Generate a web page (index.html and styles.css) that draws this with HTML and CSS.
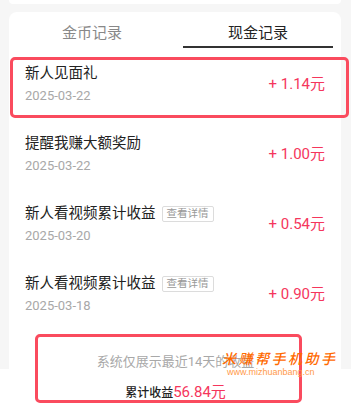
FILE: index.html
```html
<!DOCTYPE html>
<html lang="zh-CN">
<head>
<meta charset="utf-8">
<title>现金记录</title>
<link rel="stylesheet" href="styles.css">
</head>
<body>
<div class="page">
  <div class="stub"></div>
  <div class="card">
    <div class="tabs">
      <div class="tab">金币记录</div>
      <div class="tab active">现金记录</div>
    </div>
    <div class="row">
      <div class="info">
        <div class="title">新人见面礼</div>
        <div class="date">2025-03-22</div>
      </div>
      <div class="amount">+ 1.14元</div>
    </div>
    <div class="row">
      <div class="info">
        <div class="title">提醒我赚大额奖励</div>
        <div class="date">2025-03-22</div>
      </div>
      <div class="amount">+ 1.00元</div>
    </div>
    <div class="row">
      <div class="info">
        <div class="title">新人看视频累计收益<span class="tag">查看详情</span></div>
        <div class="date">2025-03-20</div>
      </div>
      <div class="amount">+ 0.54元</div>
    </div>
    <div class="row">
      <div class="info">
        <div class="title">新人看视频累计收益<span class="tag">查看详情</span></div>
        <div class="date">2025-03-18</div>
      </div>
      <div class="amount">+ 0.90元</div>
    </div>
    <div class="note">系统仅展示最近14天的收益</div>
  </div>
  <div class="bar"><span class="bar-label">累计收益</span><span class="bar-value">56.84元</span></div>

  <div class="mark mark-1"></div>
  <div class="mark mark-2"></div>
  <div class="watermark">
    <div class="wm-name">米赚帮手机助手</div>
    <div class="wm-url">www.mizhuanbang.cn</div>
  </div>
</div>
</body>
</html>
```
FILE: styles.css
```css
* { box-sizing: border-box; }
html, body { margin: 0; padding: 0; }
body {
  background: #f6f6f6;
  font-family: Roboto, "Noto Sans CJK SC", sans-serif;
  color: #222;
}
.page {
  position: relative;
  width: 351px;
  height: 406px;
  overflow: hidden;
  display: flex;
  flex-direction: column;
}
.stub {
  height: 4px;
  margin: 0 10px 0 9px;
  background: #fff;
  border-radius: 0 0 6px 6px;
  flex: none;
}
.card {
  margin: 8px 10px 0 9px;
  height: 357px;
  flex: none;
  background: #fff;
  border-radius: 8px 8px 0 0;
  overflow: hidden;
}
.tabs {
  display: flex;
  height: 36px;
}
.tab {
  flex: 1;
  margin: 0 8px;
  padding-top: 10px;
  line-height: 22px;
  font-size: 15px;
  color: #888;
  text-align: center;
}
.tab.active {
  color: #222;
  border-bottom: 2px solid #333;
}
.row {
  display: flex;
  align-items: center;
  justify-content: space-between;
  height: 70px;
  padding: 15px 16px 13px 16px;
}
.title {
  display: flex;
  align-items: center;
  font-size: 14.5px;
  line-height: 22px;
  color: #222;
}
.tag {
  margin-left: 6px;
  height: 16px;
  line-height: 14px;
  padding: 0 4px;
  border: 1px solid #dcdcdc;
  border-radius: 2px;
  font-size: 10.5px;
  color: #999;
}
.date {
  margin-top: 2px;
  font-size: 13px;
  line-height: 18px;
  color: #a8a8a8;
}
.amount {
  font-size: 15px;
  line-height: 22px;
  color: #f5365c;
}
.note {
  padding-top: 25px;
  text-align: center;
  font-size: 13px;
  line-height: 18px;
  color: #a8a8a8;
  margin-left: -9px;
  margin-right: -10px;
}
.bar {
  flex: 1;
  background: #fff;
  text-align: center;
  padding-top: 12px;
  line-height: 22px;
}
.bar-label {
  font-size: 12px;
  font-weight: 500;
  color: #222;
}
.bar-value {
  font-size: 15px;
  color: #f5365c;
}
.mark {
  position: absolute;
  border: 3px solid #fa4b5e;
  border-radius: 5px;
}
.mark-1 { left: 10px; top: 57px; width: 339px; height: 61px; }
.mark-2 { left: 35px; top: 334px; width: 267px; height: 69px; }
.watermark {
  position: absolute;
  left: 222px;
  top: 349px;
}
.wm-name {
  font-family: "Noto Sans CJK SC", sans-serif;
  font-size: 14px;
  line-height: 18px;
  font-weight: 500;
  font-style: italic;
  letter-spacing: 2.5px;
  color: #ff6a00;
}
.wm-url {
  margin-left: 5px;
  font-family: "Liberation Sans", sans-serif;
  font-size: 9px;
  line-height: 10px;
  color: #ff9a4a;
}
```
